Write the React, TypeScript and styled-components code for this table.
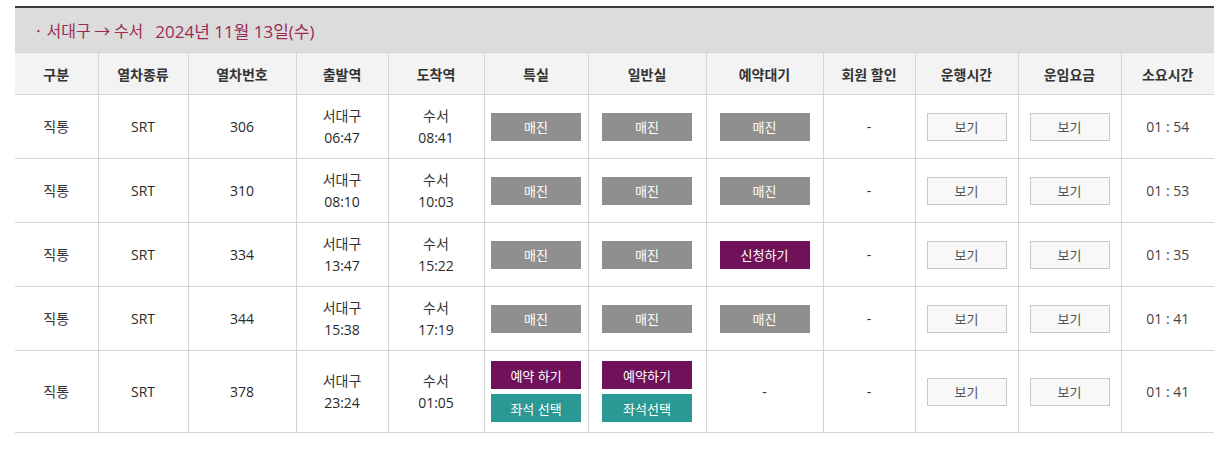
import React from "react";
import styled, { createGlobalStyle } from "styled-components";

const GlobalStyle = createGlobalStyle`
  html, body { margin: 0; padding: 0; background: #fff; }
  body { font-family: "Open Sans", "Noto Sans CJK KR", sans-serif; color: #333; }
`;

const Page = styled.div`
  padding: 6px 9px 0 15px;
`;

const Wrap = styled.div`
  border-top: 2px solid #3a3a3a;
  width: 1199px;
`;

const Caption = styled.div`
  height: 44px;
  background: #dcdcdc;
  display: flex;
  align-items: center;
  padding-left: 19px;
  font-size: 17px;
  color: #9a2b56;
  border-bottom: 1px solid #d4d4d4;
`;

const Route = styled.span`
  font-family: "Noto Sans CJK KR", sans-serif;
  font-size: 16px;
`;

const DateText = styled.span`
  margin-left: 12px;
`;

const Table = styled.table`
  width: 1199px;
  border-collapse: collapse;
  table-layout: fixed;
`;

const Th = styled.th`
  height: 41px;
  padding: 0;
  background: #f3f3f3;
  font-size: 14px;
  font-weight: 700;
  color: #333;
  border-left: 1px solid #d4d4d4;
  border-bottom: 1px solid #d4d4d4;
  &:first-child { border-left: none; }
`;

const Td = styled.td<{ $tall?: boolean }>`
  height: ${(p) => (p.$tall ? 81 : 63)}px;
  padding: 0;
  text-align: center;
  vertical-align: middle;
  font-size: 14px;
  color: #333;
  line-height: 22px;
  border-left: 1px solid #d4d4d4;
  border-bottom: 1px solid #d4d4d4;
  &:first-child { border-left: none; }
`;

const Strong = styled.span`
  font-weight: 500;
  color: #2a2a2a;
`;

const Stack = styled.div`
  display: flex;
  flex-direction: column;
  align-items: center;
  gap: 5px;
`;

const SeatButton = styled.button<{ $kind: "soldout" | "reserve" | "seat" }>`
  width: 90px;
  height: 28px;
  border: none;
  padding: 0;
  font-family: inherit;
  font-size: 13px;
  color: #fff;
  background: ${(p) =>
    p.$kind === "soldout" ? "#8f8f8f" : p.$kind === "reserve" ? "#6f1259" : "#2a9893"};
  cursor: pointer;
`;

const ViewButton = styled.button`
  width: 80px;
  height: 28px;
  border: 1px solid #c8c8c8;
  background: #f8f8f8;
  padding: 0;
  font-family: inherit;
  font-size: 13px;
  color: #555;
`;

const Duration = styled.span`
  font-size: 14px;
  color: #444;
`;

type Seat = "soldout" | "reserve" | "waitlist" | "none";

interface Row {
  no: string;
  dep: string;
  arr: string;
  first: Seat;
  normal: Seat;
  wait: Seat;
  dur: string;
  firstLabel?: string;
  normalLabel?: string;
  seatLabel1?: string;
  seatLabel2?: string;
}

const rows: Row[] = [
  { no: "306", dep: "06:47", arr: "08:41", first: "soldout", normal: "soldout", wait: "soldout", dur: "01 : 54" },
  { no: "310", dep: "08:10", arr: "10:03", first: "soldout", normal: "soldout", wait: "soldout", dur: "01 : 53" },
  { no: "334", dep: "13:47", arr: "15:22", first: "soldout", normal: "soldout", wait: "waitlist", dur: "01 : 35" },
  { no: "344", dep: "15:38", arr: "17:19", first: "soldout", normal: "soldout", wait: "soldout", dur: "01 : 41" },
  {
    no: "378", dep: "23:24", arr: "01:05", first: "reserve", normal: "reserve", wait: "none", dur: "01 : 41",
    firstLabel: "예약 하기", normalLabel: "예약하기", seatLabel1: "좌석 선택", seatLabel2: "좌석선택",
  },
];

const widths = [83, 90, 108, 92, 96, 104, 118, 117, 92, 103, 103, 93];
const headers = ["구분", "열차종류", "열차번호", "출발역", "도착역", "특실", "일반실", "예약대기", "회원 할인", "운행시간", "운임요금", "소요시간"];

function SeatCell({ state, label, seatLabel }: { state: Seat; label?: string; seatLabel?: string }) {
  if (state === "soldout") return <SeatButton $kind="soldout">매진</SeatButton>;
  if (state === "waitlist") return <SeatButton $kind="reserve">신청하기</SeatButton>;
  if (state === "reserve")
    return (
      <Stack>
        <SeatButton $kind="reserve">{label}</SeatButton>
        <SeatButton $kind="seat">{seatLabel}</SeatButton>
      </Stack>
    );
  return <>-</>;
}

export default function App() {
  return (
    <Page>
      <GlobalStyle />
      <Wrap>
        <Caption>
          <Route>· 서대구 → 수서</Route>
          <DateText>2024년 11월 13일(수)</DateText>
        </Caption>
        <Table>
          <colgroup>
            {widths.map((w, i) => (
              <col key={i} style={{ width: w }} />
            ))}
          </colgroup>
          <thead>
            <tr>
              {headers.map((h) => (
                <Th key={h}>{h}</Th>
              ))}
            </tr>
          </thead>
          <tbody>
            {rows.map((r) => {
              const tall = r.first === "reserve";
              return (
                <tr key={r.no}>
                  <Td $tall={tall}>직통</Td>
                  <Td $tall={tall}>
                    <Strong>SRT</Strong>
                  </Td>
                  <Td $tall={tall}>
                    <Strong>{r.no}</Strong>
                  </Td>
                  <Td $tall={tall}>
                    서대구
                    <br />
                    <Strong>{r.dep}</Strong>
                  </Td>
                  <Td $tall={tall}>
                    수서
                    <br />
                    <Strong>{r.arr}</Strong>
                  </Td>
                  <Td $tall={tall}>
                    <SeatCell state={r.first} label={r.firstLabel} seatLabel={r.seatLabel1} />
                  </Td>
                  <Td $tall={tall}>
                    <SeatCell state={r.normal} label={r.normalLabel} seatLabel={r.seatLabel2} />
                  </Td>
                  <Td $tall={tall}>
                    <SeatCell state={r.wait} />
                  </Td>
                  <Td $tall={tall}>-</Td>
                  <Td $tall={tall}>
                    <ViewButton>보기</ViewButton>
                  </Td>
                  <Td $tall={tall}>
                    <ViewButton>보기</ViewButton>
                  </Td>
                  <Td $tall={tall}>
                    <Duration>{r.dur}</Duration>
                  </Td>
                </tr>
              );
            })}
          </tbody>
        </Table>
      </Wrap>
    </Page>
  );
}
